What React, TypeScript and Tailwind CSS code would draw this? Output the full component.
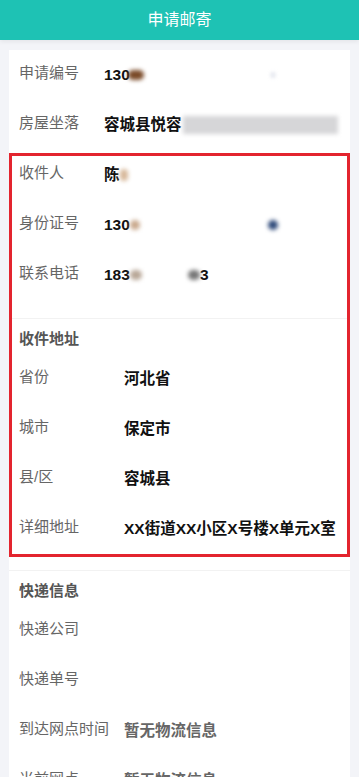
import type { ReactNode } from "react";

const FONT = "font-['Liberation_Sans','Noto_Sans_CJK_SC',sans-serif]";

function Row({
  label,
  children,
  labelW = "w-[85px]",
  muted = false,
}: {
  label: string;
  children?: ReactNode;
  labelW?: string;
  muted?: boolean;
}) {
  return (
    <div className="flex h-[50px] items-center overflow-hidden px-[10px]">
      <span className={`${labelW} shrink-0 -translate-y-[2px] text-[15px] text-[#666]`}>
        {label}
      </span>
      <span
        className={`flex items-center whitespace-nowrap text-[15.5px] font-bold ${
          muted ? "text-[#666]" : "text-[#111]"
        }`}
      >
        {children}
      </span>
    </div>
  );
}

function Smudge({ className }: { className: string }) {
  return <span className={`inline-block shrink-0 rounded-full blur-[2px] ${className}`} />;
}

function SectionTitle({ children }: { children: ReactNode }) {
  return (
    <div className="flex h-[35px] items-center px-[10px] pt-[5px] text-[15px] font-bold text-[#555]">
      {children}
    </div>
  );
}

export default function App() {
  return (
    <div className={`min-h-[777px] bg-[#f3f4f8] ${FONT}`}>
      <header className="flex h-[40px] items-center justify-center bg-[#1ec2b4] text-[16px] text-white shadow-[0_2px_4px_rgba(0,0,0,0.06)]">
        申请邮寄
      </header>

      <div className="mx-[9px] mt-[10px] bg-white">
        <Row label="申请编号">
          130
          <Smudge className="ml-[-2px] h-[10px] w-[16px] bg-[#7a4a28]" />
          <Smudge className="ml-[128px] h-[4px] w-[2px] bg-[#9aa4c0]" />
        </Row>
        <Row label="房屋坐落">
          容城县悦容
          <span className="ml-px inline-block h-[18px] w-[155px] shrink-0 bg-[#d6d6d8] blur-[2px]" />
        </Row>

        <div className="relative">
          <div className="pointer-events-none absolute inset-x-0 top-[3px] bottom-[-3px] border-[3px] border-[#e3242e]" />
          <Row label="收件人">
            陈
            <Smudge className="h-[12px] w-[8px] bg-[#d7b89a]" />
          </Row>
          <Row label="身份证号">
            130
            <Smudge className="h-[10px] w-[10px] bg-[#c9a98d]" />
            <Smudge className="ml-[128px] h-[10px] w-[10px] bg-[#2f4a7a]" />
          </Row>
          <Row label="联系电话">
            183
            <Smudge className="h-[10px] w-[12px] bg-[#b9a898]" />
            <Smudge className="ml-[46px] h-[10px] w-[12px] bg-[#777]" />
            3
          </Row>
          <div className="h-[18px]" />
          <div className="border-t border-[#f2f2f2]">
            <SectionTitle>收件地址</SectionTitle>
            <Row label="省份" labelW="w-[105px]">河北省</Row>
            <Row label="城市" labelW="w-[105px]">保定市</Row>
            <Row label="县/区" labelW="w-[105px]">容城县</Row>
            <Row label="详细地址" labelW="w-[105px]">
              XX街道XX小区X号楼X单元X室
            </Row>
          </div>
        </div>

        <div className="h-[16px]" />
        <div className="border-t border-[#f2f2f2]">
          <SectionTitle>快递信息</SectionTitle>
          <Row label="快递公司" labelW="w-[105px]" />
          <Row label="快递单号" labelW="w-[105px]" />
          <Row label="到达网点时间" labelW="w-[105px]" muted>
            暂无物流信息
          </Row>
          <Row label="当前网点" labelW="w-[105px]" muted>
            暂无物流信息
          </Row>
        </div>
      </div>
    </div>
  );
}
